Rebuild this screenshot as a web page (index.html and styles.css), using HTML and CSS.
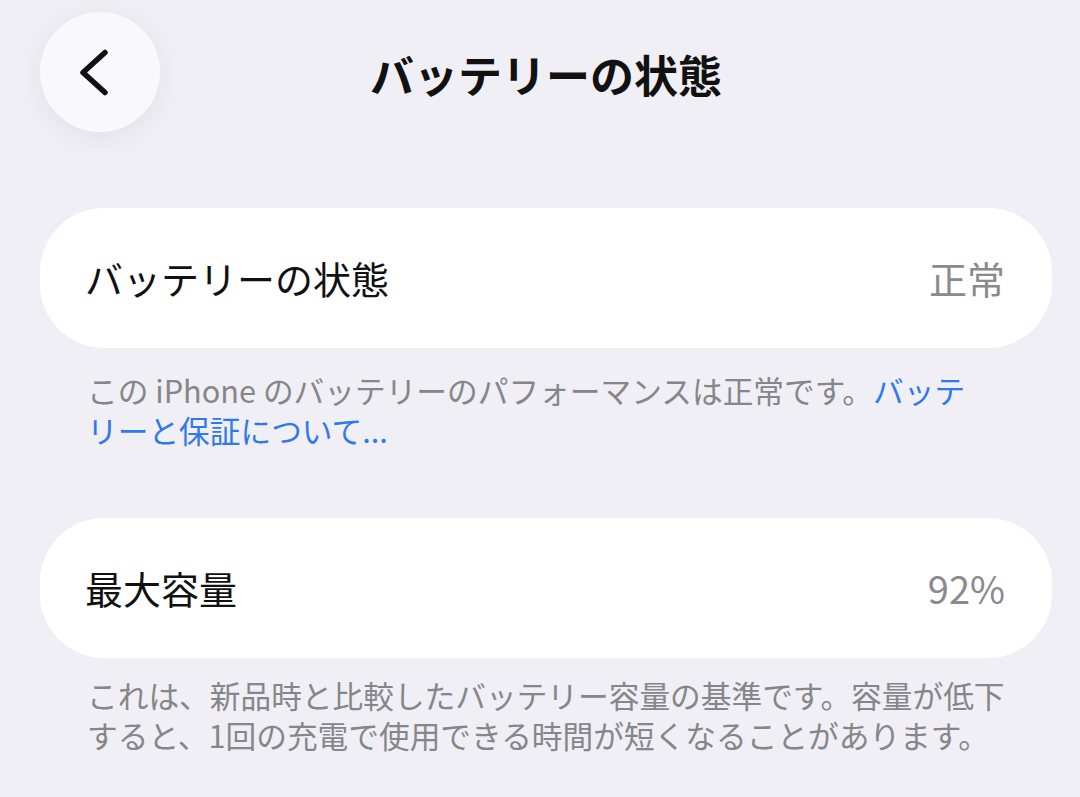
FILE: index.html
```html
<!DOCTYPE html>
<html lang="ja">
<head>
<meta charset="utf-8">
<title>バッテリーの状態</title>
<link rel="stylesheet" href="styles.css">
</head>
<body>
<div class="page">
  <header class="nav">
    <button class="back" aria-label="戻る">
      <svg width="120" height="120" viewBox="0 0 120 120">
        <path d="M65 40.5 L43 60.5 L65 80.5" fill="none" stroke="#111" stroke-width="5.5" stroke-linecap="round" stroke-linejoin="round"/>
      </svg>
    </button>
    <h1 class="title">バッテリーの状態</h1>
    <div class="spacer"></div>
  </header>

  <section class="card">
    <span class="label">バッテリーの状態</span>
    <span class="value">正常</span>
  </section>
  <p class="note note-first">この iPhone のバッテリーのパフォーマンスは正常です。<a class="link" href="#">バッテ<br>リーと保証について...</a></p>

  <section class="card card-second">
    <span class="label">最大容量</span>
    <span class="value">92%</span>
  </section>
  <p class="note note-second">これは、新品時と比較したバッテリー容量の基準です。容量が低下<br>すると、1回の充電で使用できる時間が短くなることがあります。</p>
</div>
</body>
</html>
```

FILE: styles.css
```css
html, body {
  margin: 0;
  padding: 0;
  background: #f0eff5;
}

body {
  font-family: "Noto Sans CJK JP", "Noto Sans", sans-serif;
  color: #111111;
  height: 797px;
  overflow: hidden;
}

.page {
  padding: 12px 28px 0 40px;
}

.nav {
  display: grid;
  grid-template-columns: 120px 1fr 120px;
  align-items: center;
  height: 120px;
}

.back {
  width: 120px;
  height: 120px;
  border-radius: 50%;
  border: none;
  padding: 0;
  background: #f9f9fc;
  box-shadow: 0 6px 28px rgba(40, 40, 80, 0.07);
  display: flex;
  align-items: center;
  justify-content: center;
}

.back svg {
  display: block;
}

.title {
  margin: 0;
  text-align: center;
  font-size: 44px;
  font-weight: 700;
  line-height: 60px;
  color: #111111;
  position: relative;
  top: 2px;
}

.card {
  margin-top: 76px;
  height: 140px;
  box-sizing: border-box;
  background: #ffffff;
  border-radius: 64px;
  padding: 0 47px 0 45px;
  display: flex;
  align-items: center;
  justify-content: space-between;
}

.card-second {
  margin-top: 68px;
}

.label {
  font-size: 38px;
  line-height: 50px;
  color: #111111;
}

.value {
  font-size: 38px;
  line-height: 50px;
  color: #8a8a8e;
}

.note {
  margin: 0;
  padding-left: 47px;
  font-size: 30.7px;
  line-height: 40px;
  color: #86868a;
  white-space: nowrap;
}

.note-first {
  margin-top: 22px;
}

.note-second {
  margin-top: 17px;
}

.link {
  color: #2f7ae8;
  text-decoration: none;
}
```
